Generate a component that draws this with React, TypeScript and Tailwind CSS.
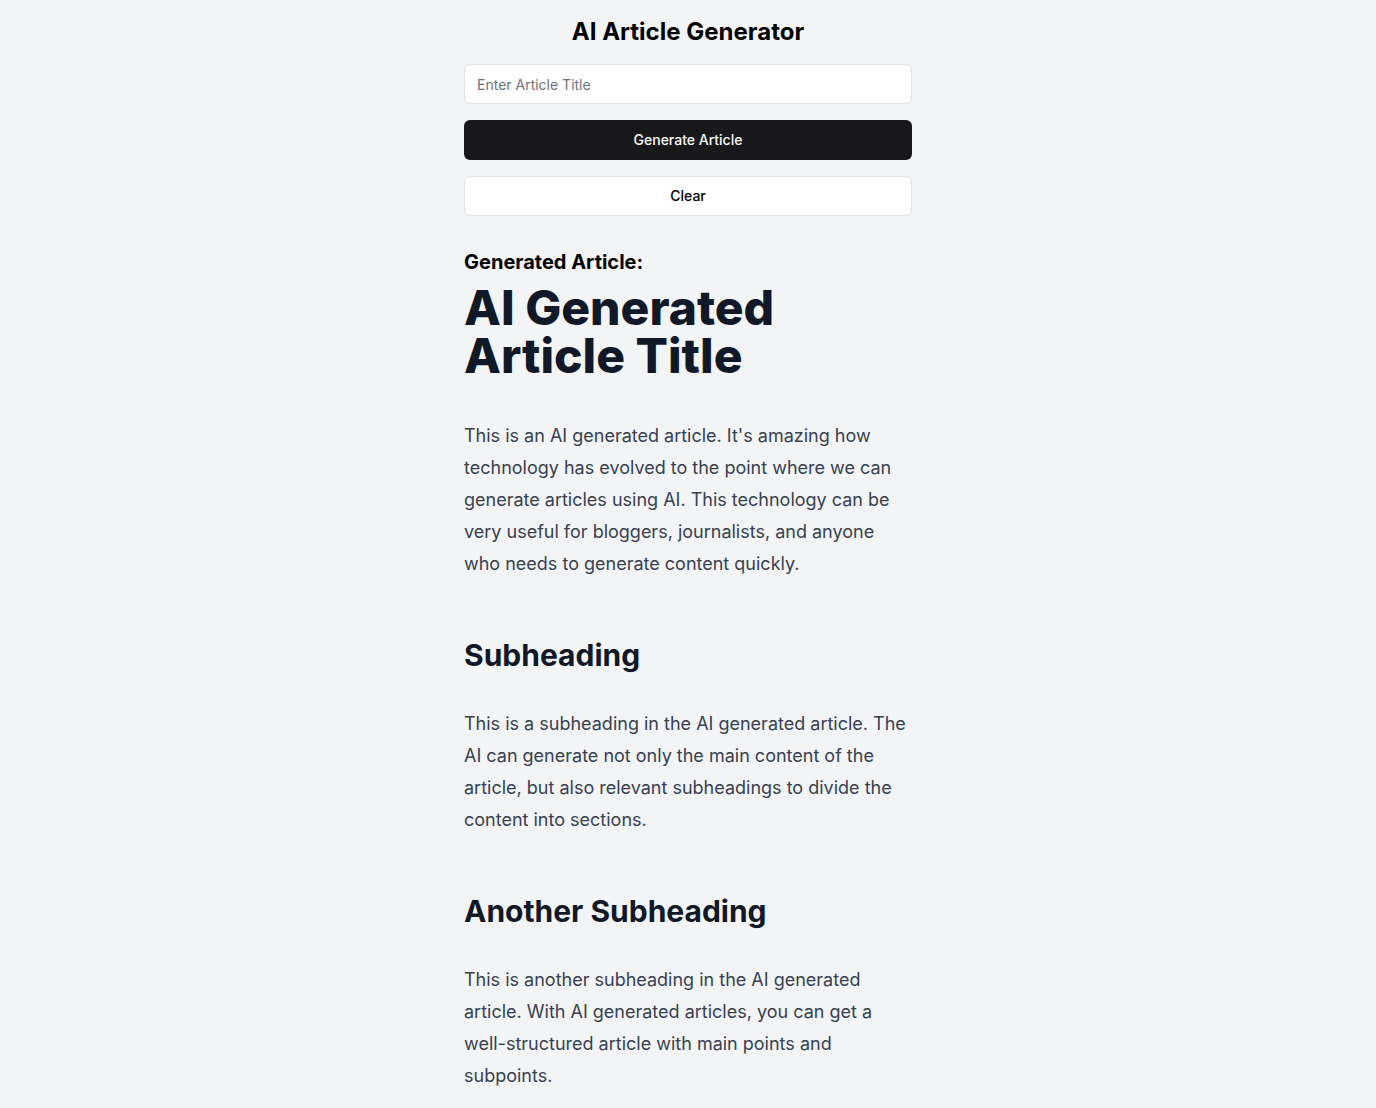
import React from "react";

export default function App() {
  return (
    <div
      className="min-h-screen bg-[#f3f4f6] pb-8"
      style={{ fontFamily: "Inter, 'Noto Sans', sans-serif" }}
    >
      <div className="mx-auto w-[448px] pt-4">
        <h1 className="text-center text-2xl leading-8 font-bold text-black mb-4">
          AI Article Generator
        </h1>
        <input
          className="block w-full h-10 rounded-md border border-[#e4e4e7] bg-white px-3 text-sm text-black placeholder:text-[#71717a] outline-none"
          placeholder="Enter Article Title"
        />
        <button className="mt-4 block w-full h-10 rounded-md bg-[#18181b] text-sm font-medium text-[#fafafa]">
          Generate Article
        </button>
        <button className="mt-4 block w-full h-10 rounded-md border border-[#e4e4e7] bg-white text-sm font-medium text-black">
          Clear
        </button>

        <h2 className="mt-8 mb-2 text-xl leading-7 font-bold text-black">
          Generated Article:
        </h2>
        <div>
          <h1 className="text-[48px] leading-[48px] font-extrabold text-[#111827] mb-10">
            AI Generated Article Title
          </h1>
          <p className="text-[18px] leading-8 text-[#374151]">
            This is an AI generated article. It's amazing how technology has evolved to the point where we can generate articles using AI. This technology can be very useful for bloggers, journalists, and anyone who needs to generate content quickly.
          </p>
          <h2 className="mt-[55px] mb-[33px] text-[30px] leading-10 font-bold text-[#111827]">
            Subheading
          </h2>
          <p className="text-[18px] leading-8 text-[#374151]">
            This is a subheading in the AI generated article. The AI can generate not only the main content of the article, but also relevant subheadings to divide the content into sections.
          </p>
          <h2 className="mt-[55px] mb-[33px] text-[30px] leading-10 font-bold text-[#111827]">
            Another Subheading
          </h2>
          <p className="text-[18px] leading-8 text-[#374151]">
            This is another subheading in the AI generated article. With AI generated articles, you can get a well-structured article with main points and subpoints.
          </p>
        </div>
      </div>
    </div>
  );
}
